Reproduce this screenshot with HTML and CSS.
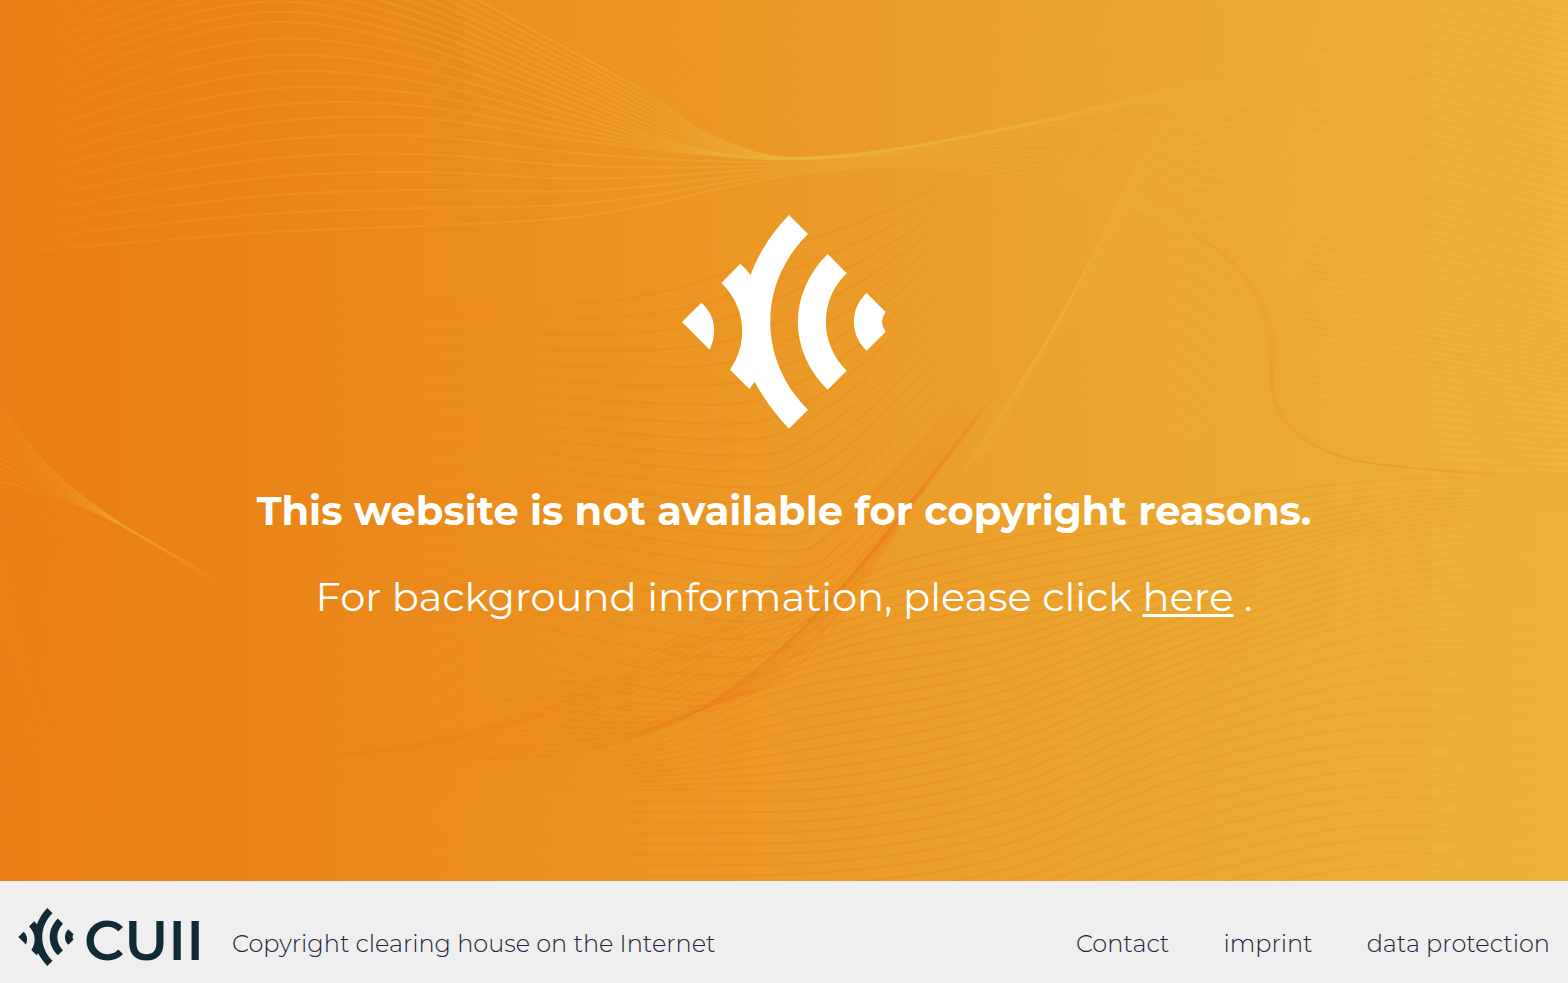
FILE: index.html
```html
<!DOCTYPE html>
<html lang="en">

<head>
    <meta charset="UTF-8">
    <meta name="viewport" content="width=device-width, initial-scale=1.0">
    <title>CUII</title>
    <link rel="stylesheet" href="styles.css">
</head>

<body>
    <svg class="symbols" aria-hidden="true">
        <symbol id="mark" viewBox="63 45 612 642">
            <path d="M63 366L121 308C162 345 170 395 146 449Z" />
            <path d="M181 249L238 191Q255 206 269 225C292 160 335 95 384 45L441 102C290 250 290 480 441 629L384 686C340 640 305 590 281 545L265 567L207 509C259 435 260 325 181 249Z" />
            <path d="M500 162L557 220C474 300 474 430 557 512L500 569C381 452 381 280 500 162Z" />
            <path d="M617 279L674 336Q652 366 674 395L617 452C566 405 566 325 617 279Z" />
        </symbol>
    </svg>

    <main class="notice">
        <svg class="waves" id="waves" viewBox="0 0 1568 881" preserveAspectRatio="none" aria-hidden="true"></svg>
        <svg class="notice-logo" aria-hidden="true"><use href="#mark" /></svg>
        <h1>This website is not available for copyright reasons.</h1>
        <p>For background information, please click <a href="#">here</a> .</p>
    </main>

    <footer class="footer">
        <a class="brand" href="#">
            <svg class="brand-logo" aria-hidden="true"><use href="#mark" /></svg>
            <span class="brand-name">CUII</span>
        </a>
        <p class="claim">Copyright clearing house on the Internet</p>
        <nav class="footer-nav">
            <a href="#">Contact</a>
            <a href="#">imprint</a>
            <a href="#">data protection</a>
        </nav>
    </footer>

    <script src="waves.js"></script>
</body>

</html>
```
FILE: styles.css
```css
*,
*::after,
*::before {
    box-sizing: border-box;
    padding: 0;
    margin: 0;
}

body {
    display: flex;
    flex-direction: column;
    min-height: 100vh;
    background-color: #efefef;
    font-family: Montserrat, Inter, sans-serif;
}

a {
    color: inherit;
}

.symbols {
    display: none;
}

/* Orange area */
.notice {
    position: relative;
    flex: 1;
    display: flex;
    flex-direction: column;
    justify-content: center;
    align-items: center;
    background: linear-gradient(90deg, #eb7e14 0%, #ea8416 15%, #eb9926 50%, #eba730 75%, #edb33c 100%);
    color: #fff;
    text-align: center;
    overflow: hidden;
}

.waves {
    position: absolute;
    top: 0;
    left: 0;
    width: 100%;
    height: 100%;
}

.waves path {
    fill: none;
    stroke-width: 2;
}

.notice-logo {
    position: relative;
    width: 204px;
    height: 214px;
    margin-bottom: 52px;
    fill: #fff;
}

.notice h1,
.notice p {
    position: relative;
    font-size: 40px;
    line-height: 60px;
}

.notice h1 {
    font-weight: 700;
    margin-bottom: 26px;
}

.notice p {
    font-weight: 400;
    margin-bottom: 40px;
}

.notice p a {
    text-decoration-thickness: 3px;
    text-underline-offset: 3px;
}

/* Footer */
.footer {
    display: flex;
    align-items: center;
    min-height: 102px;
    padding: 10px 18px 0;
    color: #22243a;
    font-size: 24px;
    font-weight: 300;
    line-height: 32px;
}

.footer a {
    text-decoration: none;
}

.brand {
    display: flex;
    align-items: center;
    gap: 10px;
    margin-right: 28px;
    color: #102a36;
}

.brand-logo {
    width: 56px;
    height: 58px;
    fill: #102a36;
}

.brand-name {
    padding-top: 6px;
    font-size: 56px;
    font-weight: 600;
    line-height: 58px;
}

.claim,
.footer-nav {
    padding-top: 14px;
}

.footer-nav {
    display: flex;
    gap: 54px;
    margin-left: auto;
}
```
FILE: waves.js
```js
const SVG_NS = "http://www.w3.org/2000/svg";
const waves = document.getElementById("waves");

// Each band is a blend between key curves.
// lines: how many lines between two keys, fade: [x, opacity] stops
const bands = [
    {
        color: "#efb43a",
        lines: [9, 6, 7],
        fade: [[0, 0.06], [250, 0.2], [700, 0.32], [1000, 0.2], [1330, 0.15]],
        keys: [
            [[0, 10], [140, -50], [280, -70], [420, -28], [560, 45], [650, 95], [710, 135], [790, 158], [900, 148], [1050, 118], [1150, 93], [1230, 82], [1300, 108], [1322, 160], [1318, 240]],
            [[0, 112], [140, 50], [280, 22], [420, 46], [560, 98], [650, 134], [715, 152], [790, 158], [900, 149], [1050, 122], [1130, 108], [1200, 118], [1260, 150], [1300, 200], [1310, 260]],
            [[0, 182], [140, 145], [280, 121], [420, 118], [560, 138], [650, 149], [720, 156], [790, 160], [900, 155], [1000, 150], [1080, 158], [1150, 190], [1200, 225], [1245, 270], [1270, 320]],
            [[0, 265], [140, 258], [280, 250], [420, 244], [560, 232], [650, 214], [720, 194], [790, 178], [860, 170], [930, 172], [1000, 180], [1060, 190], [1110, 200], [1150, 210], [1190, 230]]
        ]
    },
    {
        color: "#efb43a",
        lines: [26],
        fade: [[0, 0.04], [350, 0.14], [700, 0.08], [900, 0]],
        keys: [
            [[0, 10], [140, -50], [280, -70], [420, -28], [560, 45], [650, 90], [784, 135], [900, 150]],
            [[0, -100], [140, -150], [280, -180], [420, -160], [560, -90], [650, -50], [784, -10], [900, 0]]
        ]
    },
    {
        color: "#e99a22",
        lines: [34, 14, 12],
        fade: [[784, 0], [950, 0.08], [1270, 0.16], [1568, 0.24]],
        keys: [
            [[784, -60], [950, -62], [1150, -60], [1300, -45], [1430, -15], [1568, 15]],
            [[1190, 230], [1225, 250], [1270, 258], [1350, 270], [1450, 293], [1568, 325]],
            [[1268, 340], [1273, 350], [1290, 358], [1350, 366], [1450, 376], [1568, 392]],
            [[1270, 375], [1276, 410], [1300, 438], [1345, 458], [1430, 469], [1568, 475]]
        ]
    },
    {
        // edge of the right fold
        color: "#e98d1c",
        lines: [5],
        fade: [[1185, 0.02], [1230, 0.12], [1300, 0.12], [1568, 0.08]],
        keys: [
            [[1185, 229], [1225, 258], [1255, 300], [1270, 345], [1270, 390], [1290, 430], [1345, 458], [1430, 469], [1568, 475]],
            [[1185, 229], [1232, 258], [1264, 300], [1277, 345], [1275, 390], [1297, 430], [1352, 459], [1430, 470], [1568, 486]]
        ]
    },
    {
        color: "#efb43a",
        lines: [14, 11],
        fade: [[940, 0.02], [1060, 0.14], [1200, 0.24], [1270, 0.16], [1330, 0.14]],
        keys: [
            [[990, 450], [1060, 320], [1125, 190], [1170, 118], [1230, 83], [1290, 103], [1320, 155], [1318, 240]],
            [[970, 465], [1025, 375], [1090, 285], [1140, 240], [1195, 226], [1235, 248], [1262, 285], [1270, 330]],
            [[930, 520], [960, 478], [995, 450], [1040, 430], [1090, 425], [1130, 430], [1160, 440], [1190, 450]]
        ]
    },
    {
        color: "#e97f16",
        lines: [7, 9, 7, 12],
        fade: [[200, 0], [450, 0.2], [740, 0.36], [880, 0.28], [1000, 0]],
        keys: [
            [[280, 300], [450, 304], [590, 303], [690, 285], [780, 250], [850, 225], [900, 205], [950, 180]],
            [[200, 395], [380, 400], [580, 415], [735, 424], [800, 406], [860, 366], [930, 300], [1020, 215]],
            [[250, 480], [400, 505], [600, 545], [784, 568], [840, 545], [900, 485], [970, 400], [1060, 280]],
            [[250, 590], [400, 625], [560, 670], [690, 693], [770, 685], [840, 620], [910, 510], [1000, 390]],
            [[280, 735], [330, 750], [400, 760], [480, 763], [580, 755], [700, 710], [830, 600], [980, 410]]
        ]
    },
    {
        // upper edge of the dark fold
        color: "#e97c14",
        lines: [3],
        fade: [[280, 0.1], [500, 0.24], [700, 0.16], [840, 0]],
        keys: [
            [[285, 756], [380, 750], [480, 730], [600, 688], [700, 640], [800, 575]],
            [[285, 758], [380, 753], [480, 736], [600, 697], [700, 650], [800, 590]]
        ]
    },
    {
        // lines swinging back through the dark fold
        color: "#e97c14",
        lines: [14],
        fade: [[290, 0], [450, 0.14], [700, 0.2], [880, 0.2], [990, 0]],
        keys: [
            [[330, 755], [400, 746], [480, 728], [600, 680], [720, 610], [820, 540], [960, 400]],
            [[480, 762], [560, 757], [640, 738], [720, 700], [800, 640], [880, 550], [980, 420]]
        ]
    },
    {
        color: "#e98419",
        lines: [10, 10, 8, 10],
        fade: [[200, 0], [480, 0.18], [800, 0.4], [1150, 0.24], [1568, 0.06]],
        keys: [
            [[820, 600], [850, 582], [920, 556], [1050, 530], [1200, 502], [1330, 485], [1450, 478], [1568, 485]],
            [[270, 766], [480, 766], [640, 744], [784, 690], [984, 655], [1184, 590], [1380, 535], [1568, 510]],
            [[250, 800], [480, 794], [660, 790], [830, 788], [1000, 755], [1184, 680], [1380, 618], [1568, 605]],
            [[250, 870], [480, 878], [660, 876], [830, 872], [1000, 846], [1184, 778], [1380, 742], [1568, 765]],
            [[250, 960], [480, 990], [660, 1000], [830, 995], [1000, 970], [1184, 920], [1380, 880], [1568, 900]]
        ]
    },
    {
        // bright fold on the left
        color: "#efa52e",
        lines: [14],
        fade: [[0, 0.2], [120, 0.16], [180, 0.06], [240, 0]],
        keys: [
            [[0, 405], [50, 468], [120, 523], [220, 580], [330, 640]],
            [[0, 487], [60, 500], [120, 525], [200, 575], [300, 660]]
        ]
    },
    {
        color: "#efa52e",
        lines: [30, 24],
        fade: [[0, 0.1], [120, 0.1], [220, 0.03], [300, 0]],
        keys: [
            [[0, 487], [60, 500], [120, 525], [200, 580], [300, 690]],
            [[-10, 600], [20, 680], [60, 760], [120, 840], [200, 900]],
            [[-60, 800], [-20, 850], [30, 890], [90, 930], [160, 970]]
        ]
    }
];

function mix(a, b, t) {
    return a.map((p, i) => [p[0] + (b[i][0] - p[0]) * t, p[1] + (b[i][1] - p[1]) * t]);
}

// Smooth curve through all points
function toPath(pts) {
    let d = `M${pts[0][0]} ${pts[0][1]}`;
    for (let i = 0; i < pts.length - 1; i++) {
        const p0 = pts[i - 1] || pts[i];
        const p1 = pts[i];
        const p2 = pts[i + 1];
        const p3 = pts[i + 2] || p2;
        d += `C${p1[0] + (p2[0] - p0[0]) / 6} ${p1[1] + (p2[1] - p0[1]) / 6} ` +
            `${p2[0] - (p3[0] - p1[0]) / 6} ${p2[1] - (p3[1] - p1[1]) / 6} ${p2[0]} ${p2[1]}`;
    }
    return d;
}

function create(name, attrs, parent) {
    const el = document.createElementNS(SVG_NS, name);
    for (const key in attrs) {
        el.setAttribute(key, attrs[key]);
    }
    parent.appendChild(el);
    return el;
}

bands.forEach((band, index) => {
    const start = band.fade[0][0];
    const end = band.fade[band.fade.length - 1][0];
    const gradient = create("linearGradient", {
        id: "fade" + index,
        gradientUnits: "userSpaceOnUse",
        x1: start, y1: 0, x2: end, y2: 0
    }, waves);

    band.fade.forEach(([x, opacity]) => {
        create("stop", {
            offset: (x - start) / (end - start),
            "stop-color": band.color,
            "stop-opacity": opacity
        }, gradient);
    });

    band.lines.forEach((count, k) => {
        for (let i = 0; i < count; i++) {
            const pts = mix(band.keys[k], band.keys[k + 1], i / count);
            create("path", { d: toPath(pts), stroke: `url(#fade${index})` }, waves);
        }
    });
});
```
